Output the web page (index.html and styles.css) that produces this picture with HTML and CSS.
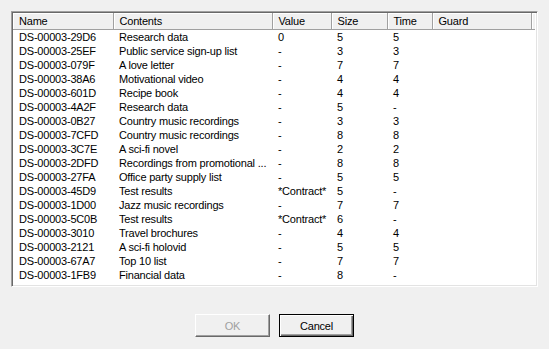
FILE: index.html
```html
<!DOCTYPE html>
<html>
<head>
    <title>Data Files</title>
    <link rel="stylesheet" href="styles.css">
</head>
<body>
    <div class="dialog">
        <div class="listbox">
            <table class="files">
                <colgroup>
                    <col style="width: 100px">
                    <col style="width: 159px">
                    <col style="width: 59px">
                    <col style="width: 56px">
                    <col style="width: 45px">
                    <col style="width: 99px">
                    <col>
                </colgroup>
                <thead>
                    <tr>
                        <th>Name</th>
                        <th>Contents</th>
                        <th>Value</th>
                        <th>Size</th>
                        <th>Time</th>
                        <th>Guard</th>
                        <th class="filler"></th>
                    </tr>
                </thead>
                <tbody>
                    <tr><td>DS-00003-29D6</td><td>Research data</td><td>0</td><td>5</td><td>5</td><td></td><td></td></tr>
                    <tr><td>DS-00003-25EF</td><td>Public service sign-up list</td><td>-</td><td>3</td><td>3</td><td></td><td></td></tr>
                    <tr><td>DS-00003-079F</td><td>A love letter</td><td>-</td><td>7</td><td>7</td><td></td><td></td></tr>
                    <tr><td>DS-00003-38A6</td><td>Motivational video</td><td>-</td><td>4</td><td>4</td><td></td><td></td></tr>
                    <tr><td>DS-00003-601D</td><td>Recipe book</td><td>-</td><td>4</td><td>4</td><td></td><td></td></tr>
                    <tr><td>DS-00003-4A2F</td><td>Research data</td><td>-</td><td>5</td><td>-</td><td></td><td></td></tr>
                    <tr><td>DS-00003-0B27</td><td>Country music recordings</td><td>-</td><td>3</td><td>3</td><td></td><td></td></tr>
                    <tr><td>DS-00003-7CFD</td><td>Country music recordings</td><td>-</td><td>8</td><td>8</td><td></td><td></td></tr>
                    <tr><td>DS-00003-3C7E</td><td>A sci-fi novel</td><td>-</td><td>2</td><td>2</td><td></td><td></td></tr>
                    <tr><td>DS-00003-2DFD</td><td>Recordings from promotional ...</td><td>-</td><td>8</td><td>8</td><td></td><td></td></tr>
                    <tr><td>DS-00003-27FA</td><td>Office party supply list</td><td>-</td><td>5</td><td>5</td><td></td><td></td></tr>
                    <tr><td>DS-00003-45D9</td><td>Test results</td><td>*Contract*</td><td>5</td><td>-</td><td></td><td></td></tr>
                    <tr><td>DS-00003-1D00</td><td>Jazz music recordings</td><td>-</td><td>7</td><td>7</td><td></td><td></td></tr>
                    <tr><td>DS-00003-5C0B</td><td>Test results</td><td>*Contract*</td><td>6</td><td>-</td><td></td><td></td></tr>
                    <tr><td>DS-00003-3010</td><td>Travel brochures</td><td>-</td><td>4</td><td>4</td><td></td><td></td></tr>
                    <tr><td>DS-00003-2121</td><td>A sci-fi holovid</td><td>-</td><td>5</td><td>5</td><td></td><td></td></tr>
                    <tr><td>DS-00003-67A7</td><td>Top 10 list</td><td>-</td><td>7</td><td>7</td><td></td><td></td></tr>
                    <tr><td>DS-00003-1FB9</td><td>Financial data</td><td>-</td><td>8</td><td>-</td><td></td><td></td></tr>
                </tbody>
            </table>
        </div>
        <div class="buttons">
            <button class="btn" disabled>OK</button>
            <button class="btn default">Cancel</button>
        </div>
    </div>
</body>
</html>
```

FILE: styles.css
```css
body {
    margin: 0;
    background-color: #f0f0f0;
    font-family: "Liberation Sans", Arial, sans-serif;
    font-size: 11px;
    letter-spacing: -0.2px;
    color: black;
}
.dialog {
    width: 549px;
    height: 349px;
    padding: 11px 0 0 11px;
    box-sizing: border-box;
}
.listbox {
    width: 527px;
    height: 276px;
    box-sizing: border-box;
    background: white;
    border-top: 1px solid #a0a0a0;
    border-left: 1px solid #a0a0a0;
    border-right: 1px solid white;
    border-bottom: 1px solid white;
    box-shadow: inset 1px 1px 0 #696969, inset -1px -1px 0 #e3e3e3;
    padding: 1px 2px 2px 1px;
    overflow: hidden;
}
.files {
    width: 100%;
    table-layout: fixed;
    border-collapse: collapse;
}
.files th {
    height: 16px;
    padding: 0 0 0 6px;
    text-align: left;
    font-weight: normal;
    background: #f0f0f0;
    border-right: 1px solid #a0a0a0;
    border-bottom: 1px solid #a0a0a0;
    box-shadow: inset 1px 1px 0 white;
    white-space: nowrap;
    overflow: hidden;
}
.files th.filler {
    border-right: none;
}
.files td {
    height: 14px;
    padding: 0 0 0 6px;
    white-space: nowrap;
    overflow: hidden;
    line-height: 14px;
}
.buttons {
    display: flex;
    justify-content: center;
    gap: 9px;
    margin-top: 27px;
    padding-right: 11px;
}
.btn {
    width: 75px;
    height: 23px;
    font-family: "Liberation Sans", Arial, sans-serif;
    font-size: 11px;
    letter-spacing: -0.2px;
    background: #f0f0f0;
    color: black;
    border-top: 1px solid white;
    border-left: 1px solid white;
    border-right: 1px solid #696969;
    border-bottom: 1px solid #696969;
    box-shadow: inset -1px -1px 0 #a0a0a0;
    padding: 0;
}
.btn:disabled {
    color: #a0a0a0;
}
.btn.default {
    border: 1px solid black;
    box-shadow: inset 1px 1px 0 white, inset -1px -1px 0 #696969, inset -2px -2px 0 #a0a0a0;
}
```
